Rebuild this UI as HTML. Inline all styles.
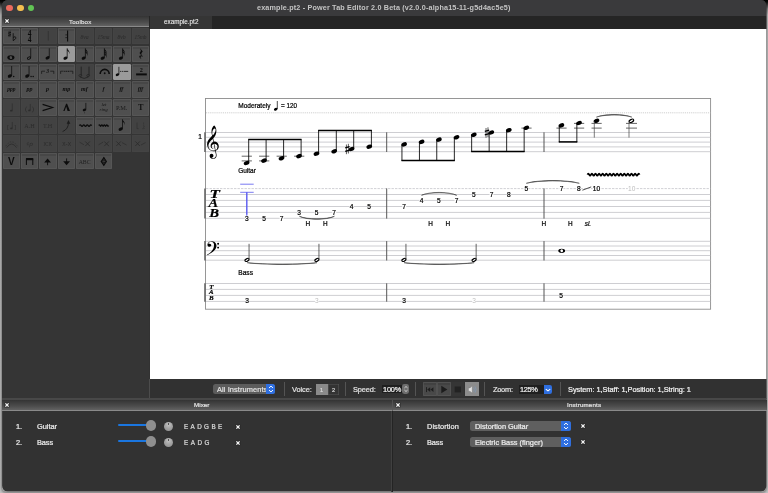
<!DOCTYPE html>
<html lang="en"><head><meta charset="utf-8"><title>example.pt2 - Power Tab Editor 2.0 Beta</title>
<style>
html,body{margin:0;padding:0}
body{width:768px;height:493px;overflow:hidden;position:relative;font-family:"Liberation Sans",sans-serif;
 background:linear-gradient(to bottom,#000 0,#0a0a0a 2px,#8a8a8a 9px,#bcbcbc 15px,#c4c4c4 100%)}
#win{position:absolute;left:0;top:0;width:768px;height:493px;background:#323232;
 clip-path:inset(0 1.7px 1.4px 2.1px round 5.5px)}
.abs{position:absolute}
.t{position:absolute;white-space:nowrap;will-change:transform;-webkit-text-stroke:0.22px currentColor}
#titlebar{left:0;top:0;width:768px;height:15.6px;background:#3a3a3c}
.tl{position:absolute;width:6.6px;height:6.6px;border-radius:50%;top:4.8px}
.hdr{position:absolute;background:linear-gradient(to bottom,#333 0,#3c3c3c 20%,#4c4c4c 60%,#626262 100%);border-bottom:1px solid #8a8a8a;box-sizing:border-box}
.cell{position:absolute;width:17.3px;height:16.6px;border-radius:1.2px;background:linear-gradient(to bottom,#474747 0,#474747 2.6px,#4f4f4f 3.4px,#4f4f4f 100%);box-shadow:inset 0 0 0 0.7px #5a5a5a}
.cell.dis{background:#424242;box-shadow:inset 0 0 0 0.6px #474747}
.cell.sel{background:#9b9b9b;box-shadow:none}
.cell svg{will-change:transform;position:absolute;left:0;top:0;width:17.2px;height:16.6px;overflow:visible}
.sep{position:absolute;width:1px;background:#545454;top:382.2px;height:13.6px}
.combo{position:absolute;background:#5c5c5c;border-radius:2.5px;overflow:hidden}
.blue{position:absolute;right:0;top:0;bottom:0;background:#2f6fe0}
.x{position:absolute;width:5px;height:5px}
#shadow{position:absolute;left:2.1px;top:0;width:764.2px;height:491.6px;border-radius:5px;box-shadow:0 0 2.5px 0.2px rgba(0,0,0,.38)}
</style></head><body><div id="shadow"></div><div id="win">

<div id="titlebar" class="abs">
<div class="tl" style="left:6.3px;background:#ec6a5e"></div>
<div class="tl" style="left:17.2px;background:#f4be4f"></div>
<div class="tl" style="left:27.9px;background:#61c454"></div>
<span id="title" class="t" style="left:256.70px;top:3px;font-size:7.2px;line-height:9px;color:#c4c4c4;font-weight:bold;font-style:normal;font-family:'Liberation Sans',sans-serif;letter-spacing:0.180px;-webkit-text-stroke:0;">example.pt2 - Power Tab Editor 2.0 Beta (v2.0.0-alpha15-11-g5d4ac5e5)</span>
</div>
<div class="abs" style="left:0;top:15.6px;width:149.4px;height:383px;background:#353535"></div>
<div class="hdr" style="left:0;top:15.6px;width:149.4px;height:11.6px"></div>
<svg class="x" style="left:3.9px;top:17.9px;width:6px;height:6px" viewBox="-3 -3 6 6"><rect x="-2.8" y="-2.8" width="5.6" height="5.6" rx="1.4" fill="#262626" opacity=".55"/><path d="M-1.6 -1.6L1.6 1.6M-1.6 1.6L1.6 -1.6" stroke="#f6f6f6" stroke-width="1.3" fill="none"/><rect x="-0.8" y="-0.8" width="1.6" height="1.6" fill="#f6f6f6"/></svg>
<span id="toolbox" class="t" style="left:68.90px;top:18px;font-size:6.2px;line-height:7px;color:#dcdcdc;font-weight:normal;font-style:normal;font-family:'Liberation Sans',sans-serif;letter-spacing:0.160px;">Toolbox</span>
<div class="cell " style="left:2.60px;top:27.80px"><svg viewBox="0 0 17.2 16.6"><g transform="translate(6.6,5.9) scale(0.72)"><path d="M-0.85 -3.9V4.5M0.85 -4.5V3.9" stroke="#0c0c0c" stroke-width="0.7"/><path d="M-1.9 -1.0L1.9 -2.1M-1.9 2.1L1.9 1.0" stroke="#0c0c0c" stroke-width="1.25"/></g><path d="M10.2 5.2V12.6" stroke="#0c0c0c" stroke-width="0.8"/><path d="M10.2 9.6C11.6 8 13.6 9.2 12.6 10.6C12 11.5 11 12 10.2 12.7" stroke="#0c0c0c" stroke-width="0.95" fill="none"/></svg></div>
<div class="cell " style="left:21.04px;top:27.80px"><svg viewBox="0 0 17.2 16.6"><text x="8.6" y="8.2" font-size="7.5" fill="#0c0c0c" font-weight="bold" font-style="normal" font-family="'Liberation Serif',serif" text-anchor="middle" >4</text><text x="8.6" y="13.6" font-size="7.5" fill="#0c0c0c" font-weight="bold" font-style="normal" font-family="'Liberation Serif',serif" text-anchor="middle" >4</text></svg></div>
<div class="cell dis" style="left:39.48px;top:27.80px"><svg viewBox="0 0 17.2 16.6"><path d="M9.3 3V12.5" stroke="#2c2c2c" stroke-width="0.7"/></svg></div>
<div class="cell " style="left:57.92px;top:27.80px"><svg viewBox="0 0 17.2 16.6"><path d="M9.6 2.6V13.6" stroke="#0c0c0c" stroke-width="1.1"/><circle cx="8.1" cy="6.8" r="0.6" fill="#0c0c0c"/><circle cx="8.1" cy="9.6" r="0.6" fill="#0c0c0c"/></svg></div>
<div class="cell dis" style="left:76.36px;top:27.80px"><svg viewBox="0 0 17.2 16.6"><text x="8.6" y="10.6" font-size="5.8" fill="#2a2a2a" font-weight="normal" font-style="italic" font-family="'Liberation Serif',serif" text-anchor="middle" >8va</text></svg></div>
<div class="cell dis" style="left:94.80px;top:27.80px"><svg viewBox="0 0 17.2 16.6"><text x="8.6" y="10.6" font-size="5.4" fill="#2a2a2a" font-weight="normal" font-style="italic" font-family="'Liberation Serif',serif" text-anchor="middle" >15ma</text></svg></div>
<div class="cell dis" style="left:113.24px;top:27.80px"><svg viewBox="0 0 17.2 16.6"><text x="8.6" y="10.6" font-size="5.8" fill="#2a2a2a" font-weight="normal" font-style="italic" font-family="'Liberation Serif',serif" text-anchor="middle" >8vb</text></svg></div>
<div class="cell dis" style="left:131.68px;top:27.80px"><svg viewBox="0 0 17.2 16.6"><text x="8.6" y="10.6" font-size="5.4" fill="#2a2a2a" font-weight="normal" font-style="italic" font-family="'Liberation Serif',serif" text-anchor="middle" >15mb</text></svg></div>
<div class="cell " style="left:2.60px;top:45.67px"><svg viewBox="0 0 17.2 16.6"><ellipse cx="7.9" cy="11.6" rx="3.55" ry="2.35" fill="#0c0c0c"/><ellipse cx="7.9" cy="11.6" rx="1.25" ry="1.5" transform="rotate(-28 7.9 11.6)" fill="#4f4f4f"/></svg></div>
<div class="cell " style="left:21.04px;top:45.67px"><svg viewBox="0 0 17.2 16.6"><ellipse cx="8.0" cy="12.1" rx="1.75" ry="1.05" transform="rotate(-24 8.0 12.1)" fill="none" stroke="#0c0c0c" stroke-width="0.9"/><path d="M9.70 11.60V2.30" stroke="#0c0c0c" stroke-width="0.75" fill="none"/></svg></div>
<div class="cell " style="left:39.48px;top:45.67px"><svg viewBox="0 0 17.2 16.6"><ellipse cx="8.6" cy="11.8" rx="2.15" ry="1.50" transform="rotate(-24 8.6 11.8)" fill="#0c0c0c"/><path d="M10.30 11.30V2.30" stroke="#0c0c0c" stroke-width="0.75" fill="none"/></svg></div>
<div class="cell sel" style="left:57.92px;top:45.67px"><svg viewBox="0 0 17.2 16.6"><ellipse cx="7.5" cy="12.1" rx="2.15" ry="1.50" transform="rotate(-24 7.5 12.1)" fill="#0c0c0c"/><path d="M9.20 11.60V2.30" stroke="#0c0c0c" stroke-width="0.75" fill="none"/><path d="M9.20 2.30c0.3 1.9 3.3 2.7 2.1 6.0c0.3-2.4-1.2-3.2-2.1-3.6z" fill="#0c0c0c"/></svg></div>
<div class="cell " style="left:76.36px;top:45.67px"><svg viewBox="0 0 17.2 16.6"><ellipse cx="7.7" cy="12.1" rx="2.15" ry="1.50" transform="rotate(-24 7.7 12.1)" fill="#0c0c0c"/><path d="M9.40 11.60V2.30" stroke="#0c0c0c" stroke-width="0.75" fill="none"/><path d="M9.40 2.30c0.3 1.9 3.3 2.7 2.1 6.0c0.3-2.4-1.2-3.2-2.1-3.6z" fill="#0c0c0c"/><path d="M9.40 4.30c0.3 1.9 3.3 2.7 2.1 6.0c0.3-2.4-1.2-3.2-2.1-3.6z" fill="#0c0c0c"/></svg></div>
<div class="cell " style="left:94.80px;top:45.67px"><svg viewBox="0 0 17.2 16.6"><ellipse cx="7.7" cy="12.1" rx="2.15" ry="1.50" transform="rotate(-24 7.7 12.1)" fill="#0c0c0c"/><path d="M9.40 11.60V2.30" stroke="#0c0c0c" stroke-width="0.75" fill="none"/><path d="M9.40 2.30c0.3 1.9 3.3 2.7 2.1 6.0c0.3-2.4-1.2-3.2-2.1-3.6z" fill="#0c0c0c"/><path d="M9.40 4.30c0.3 1.9 3.3 2.7 2.1 6.0c0.3-2.4-1.2-3.2-2.1-3.6z" fill="#0c0c0c"/><path d="M9.40 6.30c0.3 1.9 3.3 2.7 2.1 6.0c0.3-2.4-1.2-3.2-2.1-3.6z" fill="#0c0c0c"/></svg></div>
<div class="cell " style="left:113.24px;top:45.67px"><svg viewBox="0 0 17.2 16.6"><ellipse cx="7.9" cy="12.1" rx="2.15" ry="1.50" transform="rotate(-24 7.9 12.1)" fill="#0c0c0c"/><path d="M9.60 11.60V2.30" stroke="#0c0c0c" stroke-width="0.75" fill="none"/><path d="M9.60 2.30c0.3 1.9 3.3 2.7 2.1 6.0c0.3-2.4-1.2-3.2-2.1-3.6z" fill="#0c0c0c"/><path d="M9.60 4.30c0.3 1.9 3.3 2.7 2.1 6.0c0.3-2.4-1.2-3.2-2.1-3.6z" fill="#0c0c0c"/></svg></div>
<div class="cell " style="left:131.68px;top:45.67px"><svg viewBox="0 0 17.2 16.6"><path transform="translate(6.6,14.6) scale(0.0135,-0.0135)" d="M147 878 307 683Q257 624 230 581Q203 538 203 494Q203 457 227 416Q251 376 303 314L287 292Q243 320 205 320Q177 320 163 302Q149 283 149 257Q149 225 162 196Q176 168 199 142L186 123Q117 173 84 214Q51 255 51 303Q51 346 78 366Q105 386 143 386Q173 386 221 363V365L67 570Q168 659 168 736Q168 797 104 878Z" fill="#0c0c0c"/></svg></div>
<div class="cell " style="left:2.60px;top:63.54px"><svg viewBox="0 0 17.2 16.6"><ellipse cx="6.9" cy="12.0" rx="2.20" ry="1.54" transform="rotate(-24 6.9 12.0)" fill="#0c0c0c"/><path d="M8.65 11.50V2.00" stroke="#0c0c0c" stroke-width="0.75" fill="none"/><circle cx="10.70" cy="12.40" r="0.75" fill="#0c0c0c"/></svg></div>
<div class="cell " style="left:21.04px;top:63.54px"><svg viewBox="0 0 17.2 16.6"><ellipse cx="6.3" cy="12.0" rx="2.20" ry="1.54" transform="rotate(-24 6.3 12.0)" fill="#0c0c0c"/><path d="M8.05 11.50V2.00" stroke="#0c0c0c" stroke-width="0.75" fill="none"/><circle cx="10.10" cy="12.40" r="0.75" fill="#0c0c0c"/><circle cx="12.20" cy="12.40" r="0.75" fill="#0c0c0c"/></svg></div>
<div class="cell " style="left:39.48px;top:63.54px"><svg viewBox="0 0 17.2 16.6"><path d="M2.6 9.9V7.2H6.0M11.2 7.2H14.8V9.9" stroke="#0c0c0c" stroke-width="0.75" fill="none" opacity=".85"/><text x="8.7" y="9.4" font-size="5.6" fill="#0c0c0c" font-weight="bold" font-style="italic" font-family="'Liberation Serif',serif" text-anchor="middle" opacity=".9">3</text></svg></div>
<div class="cell " style="left:57.92px;top:63.54px"><svg viewBox="0 0 17.2 16.6"><path d="M2.6 9.9V7.2H5.6M11.8 7.2H14.8V9.9" stroke="#0c0c0c" stroke-width="0.75" fill="none" opacity=".8"/><path d="M6.2 7.3h1.3M8.1 7.3h1.3M10 7.3h1.3" stroke="#0c0c0c" stroke-width="1.3" opacity=".7"/></svg></div>
<div class="cell dis" style="left:76.36px;top:63.54px"><svg viewBox="0 0 17.2 16.6"><path d="M5.2 2.6V11.4M13.0 2.6V11.4" stroke="#1e1e1e" stroke-width="0.8"/><ellipse cx="4.3" cy="11.6" rx="1.4" ry="1.0" fill="none" stroke="#1e1e1e" stroke-width="0.6"/><ellipse cx="12.1" cy="11.6" rx="1.4" ry="1.0" fill="none" stroke="#1e1e1e" stroke-width="0.6"/><path d="M4.0 13.0Q8.2 15.8 12.4 13.0" stroke="#1e1e1e" stroke-width="0.7" fill="none"/></svg></div>
<div class="cell " style="left:94.80px;top:63.54px"><svg viewBox="0 0 17.2 16.6"><path d="M5.2 9.9A4.5 4.5 0 0 1 14.2 9.9" stroke="#0c0c0c" stroke-width="1.6" fill="none"/><circle cx="9.7" cy="9.2" r="0.95" fill="#0c0c0c"/></svg></div>
<div class="cell sel" style="left:113.24px;top:63.54px"><svg viewBox="0 0 17.2 16.6"><ellipse cx="4.5" cy="10.7" rx="1.85" ry="1.29" transform="rotate(-24 4.5 10.7)" fill="#0c0c0c"/><path d="M5.90 10.20V2.80" stroke="#0c0c0c" stroke-width="0.75" fill="none"/><path d="M7 7.4h1.2M8.8 7.4h1.2M10.6 7.4h4.6" stroke="#0c0c0c" stroke-width="1.0" opacity=".75"/></svg></div>
<div class="cell " style="left:131.68px;top:63.54px"><svg viewBox="0 0 17.2 16.6"><text x="9.3" y="8.2" font-size="6.2" fill="#0c0c0c" font-weight="bold" font-style="normal" font-family="'Liberation Serif',serif" text-anchor="middle" >2</text><path d="M4.1 10.4H14.8" stroke="#0c0c0c" stroke-width="2"/></svg></div>
<div class="cell " style="left:2.60px;top:81.41px"><svg viewBox="0 0 17.2 16.6"><text x="8.4" y="9.6" font-size="5.5" fill="#0c0c0c" font-weight="bold" font-style="italic" font-family="'Liberation Serif',serif" text-anchor="middle" >ppp</text></svg></div>
<div class="cell " style="left:21.04px;top:81.41px"><svg viewBox="0 0 17.2 16.6"><text x="8.4" y="9.6" font-size="6.0" fill="#0c0c0c" font-weight="bold" font-style="italic" font-family="'Liberation Serif',serif" text-anchor="middle" >pp</text></svg></div>
<div class="cell " style="left:39.48px;top:81.41px"><svg viewBox="0 0 17.2 16.6"><text x="8.4" y="9.6" font-size="6.0" fill="#0c0c0c" font-weight="bold" font-style="italic" font-family="'Liberation Serif',serif" text-anchor="middle" >p</text></svg></div>
<div class="cell " style="left:57.92px;top:81.41px"><svg viewBox="0 0 17.2 16.6"><text x="8.4" y="9.6" font-size="6.0" fill="#0c0c0c" font-weight="bold" font-style="italic" font-family="'Liberation Serif',serif" text-anchor="middle" >mp</text></svg></div>
<div class="cell " style="left:76.36px;top:81.41px"><svg viewBox="0 0 17.2 16.6"><text x="8.4" y="9.6" font-size="6.0" fill="#0c0c0c" font-weight="bold" font-style="italic" font-family="'Liberation Serif',serif" text-anchor="middle" >mf</text></svg></div>
<div class="cell " style="left:94.80px;top:81.41px"><svg viewBox="0 0 17.2 16.6"><text x="8.4" y="9.6" font-size="6.0" fill="#0c0c0c" font-weight="bold" font-style="italic" font-family="'Liberation Serif',serif" text-anchor="middle" >f</text></svg></div>
<div class="cell " style="left:113.24px;top:81.41px"><svg viewBox="0 0 17.2 16.6"><text x="8.4" y="9.6" font-size="6.0" fill="#0c0c0c" font-weight="bold" font-style="italic" font-family="'Liberation Serif',serif" text-anchor="middle" >ff</text></svg></div>
<div class="cell " style="left:131.68px;top:81.41px"><svg viewBox="0 0 17.2 16.6"><text x="8.4" y="9.6" font-size="5.5" fill="#0c0c0c" font-weight="bold" font-style="italic" font-family="'Liberation Serif',serif" text-anchor="middle" >fff</text></svg></div>
<div class="cell dis" style="left:2.60px;top:99.28px"><svg viewBox="0 0 17.2 16.6"><path d="M9.3 4.5V11.5" stroke="#2c2c2c" stroke-width="0.7"/><ellipse cx="8.3" cy="11.7" rx="1.3" ry="0.9" fill="#2c2c2c"/></svg></div>
<div class="cell dis" style="left:21.04px;top:99.28px"><svg viewBox="0 0 17.2 16.6"><text x="5.2" y="12.3" font-size="7" fill="#2c2c2c" font-weight="normal" font-style="normal" font-family="'Liberation Serif',serif" text-anchor="middle" >(</text><text x="12.0" y="12.3" font-size="7" fill="#2c2c2c" font-weight="normal" font-style="normal" font-family="'Liberation Serif',serif" text-anchor="middle" >)</text><path d="M9.3 5V11.2" stroke="#2c2c2c" stroke-width="0.7"/><ellipse cx="8.4" cy="11.4" rx="1.2" ry="0.9" fill="#2c2c2c"/></svg></div>
<div class="cell " style="left:39.48px;top:99.28px"><svg viewBox="0 0 17.2 16.6"><path d="M3.6 5.4L13.6 8.5L3.6 11.6" stroke="#0c0c0c" stroke-width="1.15" fill="none"/></svg></div>
<div class="cell " style="left:57.92px;top:99.28px"><svg viewBox="0 0 17.2 16.6"><path d="M5.3 11.9L8.1 4.8H9.1L12.0 11.9H9.6L8.2 7.6L6.6 11.9Z" fill="#0c0c0c"/></svg></div>
<div class="cell " style="left:76.36px;top:99.28px"><svg viewBox="0 0 17.2 16.6"><ellipse cx="8.5" cy="10.9" rx="1.80" ry="1.26" transform="rotate(-24 8.5 10.9)" fill="#0c0c0c"/><path d="M9.85 10.40V3.90" stroke="#0c0c0c" stroke-width="0.75" fill="none"/><circle cx="8.6" cy="13.8" r="0.5" fill="#0c0c0c" opacity=".7"/></svg></div>
<div class="cell " style="left:94.80px;top:99.28px"><svg viewBox="0 0 17.2 16.6"><text x="8.9" y="7.4" font-size="4.9" fill="#0c0c0c" font-weight="normal" font-style="italic" font-family="'Liberation Serif',serif" text-anchor="middle" opacity=".85">let</text><text x="8.6" y="11.7" font-size="4.9" fill="#0c0c0c" font-weight="normal" font-style="italic" font-family="'Liberation Serif',serif" text-anchor="middle" opacity=".85">ring</text></svg></div>
<div class="cell " style="left:113.24px;top:99.28px"><svg viewBox="0 0 17.2 16.6"><text x="8.7" y="10.8" font-size="6.3" fill="#0c0c0c" font-weight="normal" font-style="normal" font-family="'Liberation Serif',serif" text-anchor="middle" opacity=".75">P.M.</text></svg></div>
<div class="cell " style="left:131.68px;top:99.28px"><svg viewBox="0 0 17.2 16.6"><text x="8.7" y="11.4" font-size="8.2" fill="#0c0c0c" font-weight="bold" font-style="normal" font-family="'Liberation Serif',serif" text-anchor="middle" opacity=".9">T</text></svg></div>
<div class="cell dis" style="left:2.60px;top:117.15px"><svg viewBox="0 0 17.2 16.6"><text x="5.2" y="12.3" font-size="6.5" fill="#2c2c2c" font-weight="normal" font-style="normal" font-family="'Liberation Serif',serif" text-anchor="middle" >[</text><text x="12.0" y="12.3" font-size="6.5" fill="#2c2c2c" font-weight="normal" font-style="normal" font-family="'Liberation Serif',serif" text-anchor="middle" >]</text><path d="M9.3 5V11.2" stroke="#2c2c2c" stroke-width="0.7"/><ellipse cx="8.4" cy="11.4" rx="1.2" ry="0.9" fill="#2c2c2c"/></svg></div>
<div class="cell dis" style="left:21.04px;top:117.15px"><svg viewBox="0 0 17.2 16.6"><text x="8.6" y="10.9" font-size="6.2" fill="#2c2c2c" font-weight="normal" font-style="normal" font-family="'Liberation Serif',serif" text-anchor="middle" >A.H</text></svg></div>
<div class="cell dis" style="left:39.48px;top:117.15px"><svg viewBox="0 0 17.2 16.6"><text x="8.6" y="10.9" font-size="6.2" fill="#2c2c2c" font-weight="normal" font-style="normal" font-family="'Liberation Serif',serif" text-anchor="middle" >T.H</text></svg></div>
<div class="cell dis" style="left:57.92px;top:117.15px"><svg viewBox="0 0 17.2 16.6"><path d="M4.6 14.6Q10.4 12.2 10.5 5.6" stroke="#1c1c1c" stroke-width="0.85" fill="none"/><path d="M8.7 6.8L10.5 2.9L12.3 6.8Z" fill="#1c1c1c"/></svg></div>
<div class="cell " style="left:76.36px;top:117.15px"><svg viewBox="0 0 17.2 16.6"><path d="M3.4 8.6q0.88 -1.60 1.75 0q0.88 1.60 1.75 0q0.88 -1.60 1.75 0q0.88 1.60 1.75 0q0.88 -1.60 1.75 0q0.88 1.60 1.75 0q0.88 -1.60 1.75 0" stroke="#0c0c0c" stroke-width="1.25" fill="none"/></svg></div>
<div class="cell " style="left:94.80px;top:117.15px"><svg viewBox="0 0 17.2 16.6"><path d="M3.8 8.6q0.61 -1.50 1.23 0q0.61 1.50 1.23 0q0.61 -1.50 1.23 0q0.61 1.50 1.23 0q0.61 -1.50 1.23 0q0.61 1.50 1.23 0q0.61 -1.50 1.23 0q0.61 1.50 1.23 0" stroke="#0c0c0c" stroke-width="1.3" fill="none"/></svg></div>
<div class="cell " style="left:113.24px;top:117.15px"><svg viewBox="0 0 17.2 16.6"><ellipse cx="7.7" cy="12.1" rx="2.25" ry="1.57" transform="rotate(-24 7.7 12.1)" fill="#0c0c0c"/><path d="M9.50 11.60V2.30" stroke="#0c0c0c" stroke-width="0.75" fill="none"/><path d="M9.50 2.30c0.3 1.9 3.3 2.7 2.1 6.0c0.3-2.4-1.2-3.2-2.1-3.6z" fill="#0c0c0c"/></svg></div>
<div class="cell dis" style="left:131.68px;top:117.15px"><svg viewBox="0 0 17.2 16.6"><path d="M5 5.6V11.6H6.6" stroke="#303030" stroke-width="0.7" fill="none"/><path d="M11.6 5.6V11.6H10" stroke="#303030" stroke-width="0.7" fill="none" stroke-dasharray="1.2 0.8"/><path d="M12.4 9v4" stroke="#303030" stroke-width="0.5" stroke-dasharray="1 1"/></svg></div>
<div class="cell dis" style="left:2.60px;top:135.02px"><svg viewBox="0 0 17.2 16.6"><path d="M3.6 12.6Q8.6 5.4 13.6 12.6" stroke="#2c2c2c" stroke-width="0.8" fill="none"/><path d="M2.8 11.2Q8.6 2.4 14.4 11.2" stroke="#2c2c2c" stroke-width="0.6" fill="none" stroke-dasharray="1.4 1.4"/></svg></div>
<div class="cell dis" style="left:21.04px;top:135.02px"><svg viewBox="0 0 17.2 16.6"><text x="8.6" y="11.0" font-size="6" fill="#2c2c2c" font-weight="normal" font-style="italic" font-family="'DejaVu Serif',serif" text-anchor="middle" >♯p</text></svg></div>
<div class="cell dis" style="left:39.48px;top:135.02px"><svg viewBox="0 0 17.2 16.6"><text x="8.6" y="10.9" font-size="6.6" fill="#2c2c2c" font-weight="normal" font-style="normal" font-family="'Liberation Sans',sans-serif" text-anchor="middle" >x:x</text></svg></div>
<div class="cell dis" style="left:57.92px;top:135.02px"><svg viewBox="0 0 17.2 16.6"><text x="8.6" y="10.9" font-size="6.6" fill="#2c2c2c" font-weight="normal" font-style="normal" font-family="'Liberation Sans',sans-serif" text-anchor="middle" >x-x</text></svg></div>
<div class="cell dis" style="left:76.36px;top:135.02px"><svg viewBox="0 0 17.2 16.6"><path d="M3.6 7.2L8 9.8" stroke="#2c2c2c" stroke-width="0.7"/><path d="M9.3 6.500000000000001L13.899999999999999 11.100000000000001M9.3 11.100000000000001L13.899999999999999 6.500000000000001" stroke="#2a2a2a" stroke-width="0.8" fill="none"/></svg></div>
<div class="cell dis" style="left:94.80px;top:135.02px"><svg viewBox="0 0 17.2 16.6"><path d="M3.6 9.8L8 7.2" stroke="#2c2c2c" stroke-width="0.7"/><path d="M9.3 6.500000000000001L13.899999999999999 11.100000000000001M9.3 11.100000000000001L13.899999999999999 6.500000000000001" stroke="#2a2a2a" stroke-width="0.8" fill="none"/></svg></div>
<div class="cell dis" style="left:113.24px;top:135.02px"><svg viewBox="0 0 17.2 16.6"><path d="M3.3 6.3999999999999995L7.8999999999999995 11.0M3.3 11.0L7.8999999999999995 6.3999999999999995" stroke="#2a2a2a" stroke-width="0.8" fill="none"/><path d="M9 7.6L13.6 10" stroke="#2c2c2c" stroke-width="0.7"/></svg></div>
<div class="cell dis" style="left:131.68px;top:135.02px"><svg viewBox="0 0 17.2 16.6"><path d="M3.3 6.3999999999999995L7.8999999999999995 11.0M3.3 11.0L7.8999999999999995 6.3999999999999995" stroke="#2a2a2a" stroke-width="0.8" fill="none"/><path d="M9 10L13.6 7.6" stroke="#2c2c2c" stroke-width="0.7"/></svg></div>
<div class="cell " style="left:2.60px;top:152.89px"><svg viewBox="0 0 17.2 16.6"><text x="8.4" y="12.4" font-size="10" fill="#0c0c0c" font-weight="bold" font-style="normal" font-family="'Liberation Sans',sans-serif" text-anchor="middle" >V</text></svg></div>
<div class="cell " style="left:21.04px;top:152.89px"><svg viewBox="0 0 17.2 16.6"><path d="M5.4 12V5.6H11.8V12" stroke="#0c0c0c" stroke-width="1" fill="none"/><path d="M5 6.2H12.2" stroke="#0c0c0c" stroke-width="2"/></svg></div>
<div class="cell " style="left:39.48px;top:152.89px"><svg viewBox="0 0 17.2 16.6"><path d="M8.6 5.4L12 9.4H5.2Z" fill="#0c0c0c"/><path d="M8.6 8V12.2" stroke="#0c0c0c" stroke-width="0.9"/></svg></div>
<div class="cell " style="left:57.92px;top:152.89px"><svg viewBox="0 0 17.2 16.6"><path d="M8.6 12.2L12 8.2H5.2Z" fill="#0c0c0c"/><path d="M8.6 5.4V9" stroke="#0c0c0c" stroke-width="0.9"/></svg></div>
<div class="cell " style="left:76.36px;top:152.89px"><svg viewBox="0 0 17.2 16.6"><text x="8.6" y="10.8" font-size="5.8" fill="#222" font-weight="normal" font-style="normal" font-family="'Liberation Serif',serif" text-anchor="middle" >ABC</text></svg></div>
<div class="cell " style="left:94.80px;top:152.89px"><svg viewBox="0 0 17.2 16.6"><path d="M8.8 4.6L11.4 8.4L8.8 12.2L6.2 8.4Z" stroke="#0c0c0c" stroke-width="1.1" fill="none"/><circle cx="8.8" cy="8.4" r="1.5" stroke="#0c0c0c" stroke-width="0.8" fill="none"/><path d="M8.8 4.2V12.6" stroke="#0c0c0c" stroke-width="0.5"/></svg></div>
<div class="abs" style="left:149.4px;top:15.6px;width:620px;height:13px;background:#252525"></div>
<div class="abs" style="left:149.8px;top:15.9px;width:62.2px;height:12.7px;background:#353535"></div>
<span id="tab" class="t" style="left:163.70px;top:18px;font-size:6.3px;line-height:7px;color:#f0f0f0;font-weight:normal;font-style:normal;font-family:'Liberation Sans',sans-serif;letter-spacing:0.008px;-webkit-text-stroke:0.08px currentColor;">example.pt2</span>
<div class="abs" style="left:149.6px;top:28.5px;width:617px;height:350.8px;background:#fff"></div>
<div class="abs" style="left:149.4px;top:379.3px;width:620px;height:19.4px;background:#313131"></div>
<div class="abs" style="left:149.3px;top:379.3px;width:0.9px;height:19.4px;background:#4c4c4c"></div>
<div class="abs" style="left:0;top:398.2px;width:768px;height:1.8px;background:#484848"></div>
<svg class="abs" style="left:0;top:0;will-change:transform" width="768" height="493" viewBox="0 0 768 493" font-family="'Liberation Sans',sans-serif">
<rect x="205.5" y="98.5" width="505.1" height="210.7" fill="none" stroke="#8c8c8c" stroke-width="0.9"/>
<path d="M206 112.8H710.4" stroke="#c4c4c4" stroke-width="0.8" stroke-dasharray="1.2 0.9"/>
<path d="M206 188.6H710.4" stroke="#c2c2c8" stroke-width="0.75" stroke-dasharray="2.4 1.1"/>
<path d="M206 132.5H710.4" stroke="#bdbdc3" stroke-width="0.75"/>
<path d="M206 137.3H710.4" stroke="#bdbdc3" stroke-width="0.75"/>
<path d="M206 142.1H710.4" stroke="#bdbdc3" stroke-width="0.75"/>
<path d="M206 146.9H710.4" stroke="#bdbdc3" stroke-width="0.75"/>
<path d="M206 151.7H710.4" stroke="#bdbdc3" stroke-width="0.75"/>
<path d="M206 194.5H710.4" stroke="#bdbdc3" stroke-width="0.75"/>
<path d="M206 200.4H710.4" stroke="#bdbdc3" stroke-width="0.75"/>
<path d="M206 206.5H710.4" stroke="#bdbdc3" stroke-width="0.75"/>
<path d="M206 212.4H710.4" stroke="#bdbdc3" stroke-width="0.75"/>
<path d="M206 218.3H710.4" stroke="#bdbdc3" stroke-width="0.75"/>
<path d="M206 241.3H710.4" stroke="#bdbdc3" stroke-width="0.75"/>
<path d="M206 246.0H710.4" stroke="#bdbdc3" stroke-width="0.75"/>
<path d="M206 250.7H710.4" stroke="#bdbdc3" stroke-width="0.75"/>
<path d="M206 255.5H710.4" stroke="#bdbdc3" stroke-width="0.75"/>
<path d="M206 260.2H710.4" stroke="#bdbdc3" stroke-width="0.75"/>
<path d="M206 283.5H710.4" stroke="#bdbdc3" stroke-width="0.75"/>
<path d="M206 289.4H710.4" stroke="#bdbdc3" stroke-width="0.75"/>
<path d="M206 295.4H710.4" stroke="#bdbdc3" stroke-width="0.75"/>
<path d="M206 301.4H710.4" stroke="#bdbdc3" stroke-width="0.75"/>
<path d="M205 132.3V152.0" stroke="#6e6e6e" stroke-width="1.7"/>
<path d="M205 188.4V218.60000000000002" stroke="#6e6e6e" stroke-width="1.7"/>
<path d="M205 241.10000000000002V260.5" stroke="#6e6e6e" stroke-width="1.7"/>
<path d="M205 283.3V301.7" stroke="#6e6e6e" stroke-width="1.7"/>
<path d="M386.7 132.3V152.0" stroke="#555" stroke-width="1"/>
<path d="M386.7 188.4V218.60000000000002" stroke="#555" stroke-width="1"/>
<path d="M386.7 241.10000000000002V260.5" stroke="#555" stroke-width="1"/>
<path d="M386.7 283.3V301.7" stroke="#555" stroke-width="1"/>
<path d="M544.0 132.3V152.0" stroke="#555" stroke-width="1"/>
<path d="M544.0 188.4V218.60000000000002" stroke="#555" stroke-width="1"/>
<path d="M544.0 241.10000000000002V260.5" stroke="#555" stroke-width="1"/>
<path d="M544.0 283.3V301.7" stroke="#555" stroke-width="1"/>
<path transform="translate(206.1,151.2) scale(0.0192,-0.0192)" d="M314 801Q300 854 291 906Q282 958 282 1012Q282 1059 288 1100Q295 1142 307 1177Q320 1217 341 1252Q362 1288 386 1311Q409 1334 427 1334Q451 1334 493 1249Q514 1206 524 1156Q534 1106 534 1049Q534 978 515 908Q496 837 460 775Q423 713 372 666L407 498Q422 500 432 501Q442 502 447 502Q508 502 556 468Q604 433 632 377Q661 321 661 254Q661 177 622 116Q582 54 503 25Q508 8 532 -117Q538 -147 541 -164Q544 -182 545 -195Q546 -208 546 -225Q546 -275 522 -314Q497 -354 456 -376Q414 -398 363 -398Q311 -398 271 -378Q231 -359 208 -324Q185 -290 185 -245Q185 -197 212 -165Q238 -133 287 -133Q329 -133 356 -164Q382 -194 382 -236Q382 -272 357 -299Q332 -326 292 -326H282Q308 -365 364 -365Q433 -365 472 -320Q511 -275 511 -205Q511 -188 507 -160Q503 -131 493 -91Q483 -51 478 -25Q472 1 470 12Q436 2 390 2Q304 2 222 52Q142 102 96 184Q50 266 50 361Q50 451 91 530Q132 609 192 675Q253 741 314 801ZM341 826Q364 838 390 870Q416 903 440 945Q464 987 479 1030Q494 1072 494 1106Q494 1142 483 1163Q472 1184 445 1184Q421 1184 398 1162Q376 1140 358 1104Q341 1067 331 1022Q321 977 321 930Q321 898 328 872Q334 846 341 826ZM398 379Q371 373 347 354Q323 334 308 306Q294 279 294 248Q294 223 307 196Q320 170 339 154Q352 142 365 136Q380 129 380 123Q380 120 370 117Q332 126 302 151Q271 176 254 212Q236 247 236 287Q236 330 254 370Q271 410 302 442Q334 474 374 490L345 641Q229 547 174 456Q120 366 120 277Q120 212 154 156Q188 100 247 66Q306 31 380 31Q400 31 420 35Q441 39 464 45ZM495 55Q593 97 593 227Q593 270 571 306Q549 341 512 362Q475 383 429 383Z" fill="#000"/>
<path transform="translate(206.1,257.0) scale(0.0175,-0.0175)" d="M50 123Q216 231 288 301Q336 348 373 408Q410 469 432 536Q453 603 453 669Q453 728 435 774Q417 819 383 845Q349 871 302 871Q284 871 264 867Q245 863 224 855Q181 839 158 814Q135 788 135 765Q135 756 143 752Q151 748 158 748Q168 748 183 752Q190 754 196 755Q203 756 210 756Q248 756 272 734Q296 711 296 674Q296 638 266 612Q236 586 195 586Q146 586 111 617Q76 648 76 697Q76 756 109 802Q142 848 198 874Q255 900 324 900Q400 900 460 867Q520 834 556 776Q591 719 591 646Q591 551 538 464Q511 419 476 379Q442 339 389 298Q336 256 256 208Q176 160 57 101ZM687 809Q710 809 726 793Q742 777 742 754Q742 731 726 716Q710 700 687 700Q664 700 648 716Q632 731 632 754Q632 777 648 793Q664 809 687 809ZM687 589Q710 589 726 573Q742 557 742 534Q742 511 726 496Q710 480 687 480Q664 480 648 496Q632 511 632 534Q632 557 648 573Q664 589 687 589Z" fill="#000"/>
<text x="209.4" y="198.2" font-size="12.4" fill="#000" stroke="#000" stroke-width="0.22" text-anchor="start" font-weight="bold" font-style="italic" font-family="'Liberation Serif',serif" textLength="10.4" lengthAdjust="spacingAndGlyphs">T</text>
<text x="208.6" y="207.2" font-size="12.4" fill="#000" stroke="#000" stroke-width="0.22" text-anchor="start" font-weight="bold" font-style="italic" font-family="'Liberation Serif',serif" textLength="9.6" lengthAdjust="spacingAndGlyphs">A</text>
<text x="209.2" y="216.9" font-size="12.4" fill="#000" stroke="#000" stroke-width="0.22" text-anchor="start" font-weight="bold" font-style="italic" font-family="'Liberation Serif',serif" textLength="9.8" lengthAdjust="spacingAndGlyphs">B</text>
<text x="211.3" y="289.2" font-size="6.9" fill="#000" stroke="#000" stroke-width="0.22" text-anchor="middle" font-weight="bold" font-style="italic" font-family="'Liberation Serif',serif" >T</text>
<text x="211.3" y="294.4" font-size="6.9" fill="#000" stroke="#000" stroke-width="0.22" text-anchor="middle" font-weight="bold" font-style="italic" font-family="'Liberation Serif',serif" >A</text>
<text x="211.3" y="299.9" font-size="6.9" fill="#000" stroke="#000" stroke-width="0.22" text-anchor="middle" font-weight="bold" font-style="italic" font-family="'Liberation Serif',serif" >B</text>
<text x="200.2" y="138.9" font-size="6.6" fill="#000" stroke="#000" stroke-width="0.22" text-anchor="middle" font-weight="normal" font-style="normal" >1</text>
<text x="238.2" y="108" font-size="6.9" fill="#000" stroke="#000" stroke-width="0.22" text-anchor="start" font-weight="normal" font-style="normal" textLength="32.3" lengthAdjust="spacingAndGlyphs">Moderately</text>
<ellipse cx="275.7" cy="109.3" rx="1.9" ry="1.35" transform="rotate(-24 275.7 109.3)" fill="#000"/><path d="M277.3 109V101" stroke="#000" stroke-width="0.7"/>
<text x="281" y="108" font-size="6.9" fill="#000" stroke="#000" stroke-width="0.22" text-anchor="start" font-weight="normal" font-style="normal" textLength="16" lengthAdjust="spacingAndGlyphs">= 120</text>
<text x="238.2" y="173" font-size="6.9" fill="#000" stroke="#000" stroke-width="0.22" text-anchor="start" font-weight="normal" font-style="normal" textLength="17.7" lengthAdjust="spacingAndGlyphs">Guitar</text>
<text x="238.2" y="274.7" font-size="6.9" fill="#000" stroke="#000" stroke-width="0.22" text-anchor="start" font-weight="normal" font-style="normal" textLength="14.8" lengthAdjust="spacingAndGlyphs">Bass</text>
<path d="M241.70 156.2H251.90" stroke="#4a4a4a" stroke-width="0.85"/>
<path d="M241.70 160.9H251.90" stroke="#4a4a4a" stroke-width="0.85"/>
<path d="M259.10 156.2H269.30" stroke="#4a4a4a" stroke-width="0.85"/>
<path d="M259.10 160.9H269.30" stroke="#4a4a4a" stroke-width="0.85"/>
<path d="M276.60 156.2H286.80" stroke="#4a4a4a" stroke-width="0.85"/>
<path d="M294.10 156.2H304.30" stroke="#4a4a4a" stroke-width="0.85"/>
<ellipse cx="246.6" cy="163.0" rx="2.95" ry="2.0" transform="rotate(-24 246.6 163.0)" fill="#000"/>
<path d="M248.70 162.40V139.2" stroke="#000" stroke-width="0.85"/>
<ellipse cx="264.0" cy="160.6" rx="2.95" ry="2.0" transform="rotate(-24 264.0 160.6)" fill="#000"/>
<path d="M266.10 160.00V139.2" stroke="#000" stroke-width="0.85"/>
<ellipse cx="281.5" cy="158.3" rx="2.95" ry="2.0" transform="rotate(-24 281.5 158.3)" fill="#000"/>
<path d="M283.60 157.70V139.2" stroke="#000" stroke-width="0.85"/>
<ellipse cx="299.0" cy="156.1" rx="2.95" ry="2.0" transform="rotate(-24 299.0 156.1)" fill="#000"/>
<path d="M301.10 155.50V139.2" stroke="#000" stroke-width="0.85"/>
<path d="M248.3 139.6H301.5" stroke="#000" stroke-width="1.5"/>
<ellipse cx="316.5" cy="153.7" rx="2.95" ry="2.0" transform="rotate(-24 316.5 153.7)" fill="#000"/>
<path d="M318.60 153.10V130" stroke="#000" stroke-width="0.85"/>
<ellipse cx="334.2" cy="151.3" rx="2.95" ry="2.0" transform="rotate(-24 334.2 151.3)" fill="#000"/>
<path d="M336.30 150.70V130" stroke="#000" stroke-width="0.85"/>
<ellipse cx="351.6" cy="149.0" rx="2.95" ry="2.0" transform="rotate(-24 351.6 149.0)" fill="#000"/>
<path d="M353.70 148.40V130" stroke="#000" stroke-width="0.85"/>
<ellipse cx="369.3" cy="146.7" rx="2.95" ry="2.0" transform="rotate(-24 369.3 146.7)" fill="#000"/>
<path d="M371.40 146.10V130" stroke="#000" stroke-width="0.85"/>
<path d="M318.2 130.4H371.8" stroke="#000" stroke-width="1.5"/>
<g transform="translate(347.4,149.0) scale(1.1555555555555557)"><path d="M-0.85 -3.9V4.5M0.85 -4.5V3.9" stroke="#000" stroke-width="0.55"/><path d="M-1.9 -1.0L1.9 -2.1M-1.9 2.1L1.9 1.0" stroke="#000" stroke-width="1.15"/></g>
<ellipse cx="404.1" cy="144.4" rx="2.95" ry="2.0" transform="rotate(-24 404.1 144.4)" fill="#000"/>
<path d="M401.95 145.00V161" stroke="#000" stroke-width="0.85"/>
<ellipse cx="421.6" cy="141.9" rx="2.95" ry="2.0" transform="rotate(-24 421.6 141.9)" fill="#000"/>
<path d="M419.45 142.50V161" stroke="#000" stroke-width="0.85"/>
<ellipse cx="438.9" cy="139.6" rx="2.95" ry="2.0" transform="rotate(-24 438.9 139.6)" fill="#000"/>
<path d="M436.75 140.20V161" stroke="#000" stroke-width="0.85"/>
<ellipse cx="456.5" cy="137.3" rx="2.95" ry="2.0" transform="rotate(-24 456.5 137.3)" fill="#000"/>
<path d="M454.35 137.90V161" stroke="#000" stroke-width="0.85"/>
<path d="M401.5 160.6H454.8" stroke="#000" stroke-width="1.5"/>
<path d="M521.40 128.1H531.60" stroke="#4a4a4a" stroke-width="0.85"/>
<ellipse cx="473.8" cy="134.8" rx="2.95" ry="2.0" transform="rotate(-24 473.8 134.8)" fill="#000"/>
<path d="M471.65 135.40V152" stroke="#000" stroke-width="0.85"/>
<ellipse cx="491.3" cy="132.5" rx="2.95" ry="2.0" transform="rotate(-24 491.3 132.5)" fill="#000"/>
<path d="M489.15 133.10V152" stroke="#000" stroke-width="0.85"/>
<ellipse cx="508.8" cy="130.2" rx="2.95" ry="2.0" transform="rotate(-24 508.8 130.2)" fill="#000"/>
<path d="M506.65 130.80V152" stroke="#000" stroke-width="0.85"/>
<ellipse cx="526.3" cy="127.8" rx="2.95" ry="2.0" transform="rotate(-24 526.3 127.8)" fill="#000"/>
<path d="M524.15 128.40V152" stroke="#000" stroke-width="0.85"/>
<path d="M471.2 151.6H524.6" stroke="#000" stroke-width="1.5"/>
<g transform="translate(487.0,132.5) scale(1.1555555555555557)"><path d="M-0.85 -3.9V4.5M0.85 -4.5V3.9" stroke="#000" stroke-width="0.55"/><path d="M-1.9 -1.0L1.9 -2.1M-1.9 2.1L1.9 1.0" stroke="#000" stroke-width="1.15"/></g>
<path d="M556.40 128.1H566.60" stroke="#4a4a4a" stroke-width="0.85"/>
<path d="M574.00 123.4H584.20" stroke="#4a4a4a" stroke-width="0.85"/>
<path d="M574.00 128.1H584.20" stroke="#4a4a4a" stroke-width="0.85"/>
<path d="M591.50 123.4H601.70" stroke="#4a4a4a" stroke-width="0.85"/>
<path d="M591.50 128.1H601.70" stroke="#4a4a4a" stroke-width="0.85"/>
<path d="M626.00 123.4H637.00" stroke="#4a4a4a" stroke-width="0.85"/>
<path d="M626.00 128.1H637.00" stroke="#4a4a4a" stroke-width="0.85"/>
<ellipse cx="561.4" cy="125.4" rx="2.95" ry="2.0" transform="rotate(-24 561.4 125.4)" fill="#000"/>
<path d="M559.25 126.00V142.2" stroke="#000" stroke-width="0.85"/>
<ellipse cx="579.0" cy="123.0" rx="2.95" ry="2.0" transform="rotate(-24 579.0 123.0)" fill="#000"/>
<path d="M576.85 123.60V142.2" stroke="#000" stroke-width="0.85"/>
<path d="M558.8 141.9H577.3" stroke="#000" stroke-width="1.5"/>
<ellipse cx="596.5" cy="120.8" rx="2.95" ry="2.0" transform="rotate(-24 596.5 120.8)" fill="#000"/>
<path d="M594.3 121.4V137.6" stroke="#444" stroke-width="0.7"/>
<ellipse cx="631.4" cy="120.8" rx="2.95" ry="2.0" transform="rotate(-24 631.4 120.8)" fill="#000"/><ellipse cx="631.4" cy="120.8" rx="2.00" ry="0.70" transform="rotate(-34 631.4 120.8)" fill="#fff"/>
<path d="M629 121.4V137.6" stroke="#444" stroke-width="0.7"/>
<path d="M596.4 117.1C604.19 113.77 624.01 113.77 631.8 117.1C624.01 114.37 604.19 114.37 596.4 117.1Z" fill="#333" stroke="#333" stroke-width="0.5"/>
<path d="M587.4 174.6q0.9 -2.0 1.8 0q0.9 2.0 1.8 0q0.9 -2.0 1.8 0q0.9 2.0 1.8 0q0.9 -2.0 1.8 0q0.9 2.0 1.8 0q0.9 -2.0 1.8 0q0.9 2.0 1.8 0q0.9 -2.0 1.8 0q0.9 2.0 1.8 0q0.9 -2.0 1.8 0q0.9 2.0 1.8 0q0.9 -2.0 1.8 0q0.9 2.0 1.8 0q0.9 -2.0 1.8 0q0.9 2.0 1.8 0q0.9 -2.0 1.8 0q0.9 2.0 1.8 0q0.9 -2.0 1.8 0q0.9 2.0 1.8 0q0.9 -2.0 1.8 0q0.9 2.0 1.8 0q0.9 -2.0 1.8 0q0.9 2.0 1.8 0q0.9 -2.0 1.8 0q0.9 2.0 1.8 0q0.9 -2.0 1.8 0q0.9 2.0 1.8 0q0.9 -2.0 1.8 0" stroke="#000" stroke-width="1.75" fill="none"/>
<path d="M240.2 184.2H253.7M240.2 192.3H253.7" stroke="#6a6af0" stroke-width="0.9"/><path d="M246.8 192.3V216" stroke="#5c5cf0" stroke-width="1"/>
<rect x="244.85" y="215.70" width="3.90" height="5.2" fill="#fff"/><text x="246.8" y="220.65" font-size="6.6" fill="#000" stroke="#000" stroke-width="0.22" text-anchor="middle" font-weight="normal" font-style="normal" >3</text>
<rect x="262.25" y="215.70" width="3.90" height="5.2" fill="#fff"/><text x="264.2" y="220.65" font-size="6.6" fill="#000" stroke="#000" stroke-width="0.22" text-anchor="middle" font-weight="normal" font-style="normal" >5</text>
<rect x="279.65" y="215.70" width="3.90" height="5.2" fill="#fff"/><text x="281.6" y="220.65" font-size="6.6" fill="#000" stroke="#000" stroke-width="0.22" text-anchor="middle" font-weight="normal" font-style="normal" >7</text>
<rect x="297.25" y="209.80" width="3.90" height="5.2" fill="#fff"/><text x="299.2" y="214.75" font-size="6.6" fill="#000" stroke="#000" stroke-width="0.22" text-anchor="middle" font-weight="normal" font-style="normal" >3</text>
<rect x="314.75" y="209.80" width="3.90" height="5.2" fill="#fff"/><text x="316.7" y="214.75" font-size="6.6" fill="#000" stroke="#000" stroke-width="0.22" text-anchor="middle" font-weight="normal" font-style="normal" >5</text>
<rect x="332.25" y="209.80" width="3.90" height="5.2" fill="#fff"/><text x="334.2" y="214.75" font-size="6.6" fill="#000" stroke="#000" stroke-width="0.22" text-anchor="middle" font-weight="normal" font-style="normal" >7</text>
<rect x="349.65" y="203.90" width="3.90" height="5.2" fill="#fff"/><text x="351.6" y="208.85" font-size="6.6" fill="#000" stroke="#000" stroke-width="0.22" text-anchor="middle" font-weight="normal" font-style="normal" >4</text>
<rect x="367.05" y="203.90" width="3.90" height="5.2" fill="#fff"/><text x="369.0" y="208.85" font-size="6.6" fill="#000" stroke="#000" stroke-width="0.22" text-anchor="middle" font-weight="normal" font-style="normal" >5</text>
<rect x="402.25" y="203.90" width="3.90" height="5.2" fill="#fff"/><text x="404.2" y="208.85" font-size="6.6" fill="#000" stroke="#000" stroke-width="0.22" text-anchor="middle" font-weight="normal" font-style="normal" >7</text>
<rect x="419.55" y="197.80" width="3.90" height="5.2" fill="#fff"/><text x="421.5" y="202.75" font-size="6.6" fill="#000" stroke="#000" stroke-width="0.22" text-anchor="middle" font-weight="normal" font-style="normal" >4</text>
<rect x="436.95" y="197.80" width="3.90" height="5.2" fill="#fff"/><text x="438.9" y="202.75" font-size="6.6" fill="#000" stroke="#000" stroke-width="0.22" text-anchor="middle" font-weight="normal" font-style="normal" >5</text>
<rect x="454.55" y="197.80" width="3.90" height="5.2" fill="#fff"/><text x="456.5" y="202.75" font-size="6.6" fill="#000" stroke="#000" stroke-width="0.22" text-anchor="middle" font-weight="normal" font-style="normal" >7</text>
<rect x="471.95" y="191.90" width="3.90" height="5.2" fill="#fff"/><text x="473.9" y="196.85" font-size="6.6" fill="#000" stroke="#000" stroke-width="0.22" text-anchor="middle" font-weight="normal" font-style="normal" >5</text>
<rect x="489.55" y="191.90" width="3.90" height="5.2" fill="#fff"/><text x="491.5" y="196.85" font-size="6.6" fill="#000" stroke="#000" stroke-width="0.22" text-anchor="middle" font-weight="normal" font-style="normal" >7</text>
<rect x="506.85" y="191.90" width="3.90" height="5.2" fill="#fff"/><text x="508.8" y="196.85" font-size="6.6" fill="#000" stroke="#000" stroke-width="0.22" text-anchor="middle" font-weight="normal" font-style="normal" >8</text>
<rect x="524.35" y="186.00" width="3.90" height="5.2" fill="#fff"/><text x="526.3" y="190.95" font-size="6.6" fill="#000" stroke="#000" stroke-width="0.22" text-anchor="middle" font-weight="normal" font-style="normal" >5</text>
<rect x="559.55" y="186.00" width="3.90" height="5.2" fill="#fff"/><text x="561.5" y="190.95" font-size="6.6" fill="#000" stroke="#000" stroke-width="0.22" text-anchor="middle" font-weight="normal" font-style="normal" >7</text>
<rect x="576.85" y="186.00" width="3.90" height="5.2" fill="#fff"/><text x="578.8" y="190.95" font-size="6.6" fill="#000" stroke="#000" stroke-width="0.22" text-anchor="middle" font-weight="normal" font-style="normal" >8</text>
<rect x="592.60" y="186.00" width="7.80" height="5.2" fill="#fff"/><text x="596.5" y="190.95" font-size="6.6" fill="#000" stroke="#000" stroke-width="0.22" text-anchor="middle" font-weight="normal" font-style="normal" >10</text>
<rect x="627.80" y="186.00" width="7.80" height="5.2" fill="#fff"/><text x="631.7" y="190.95" font-size="6.6" fill="#bcbcbc" text-anchor="middle" font-weight="normal" font-style="normal" >10</text>
<path d="M246.8 192.3V214.6" stroke="#5c5cf0" stroke-width="1"/>
<rect x="245.05" y="298.40" width="3.90" height="5.2" fill="#fff"/><text x="247.0" y="303.35" font-size="6.6" fill="#000" stroke="#000" stroke-width="0.22" text-anchor="middle" font-weight="normal" font-style="normal" >3</text>
<rect x="402.25" y="298.40" width="3.90" height="5.2" fill="#fff"/><text x="404.2" y="303.35" font-size="6.6" fill="#000" stroke="#000" stroke-width="0.22" text-anchor="middle" font-weight="normal" font-style="normal" >3</text>
<rect x="559.25" y="292.60" width="3.90" height="5.2" fill="#fff"/><text x="561.2" y="297.55" font-size="6.6" fill="#000" stroke="#000" stroke-width="0.22" text-anchor="middle" font-weight="normal" font-style="normal" >5</text>
<rect x="314.95" y="298.40" width="3.90" height="5.2" fill="#fff"/><text x="316.9" y="303.35" font-size="6.6" fill="#c0c0c0" text-anchor="middle" font-weight="normal" font-style="normal" >3</text>
<rect x="472.15" y="298.40" width="3.90" height="5.2" fill="#fff"/><text x="474.1" y="303.35" font-size="6.6" fill="#c0c0c0" text-anchor="middle" font-weight="normal" font-style="normal" >3</text>
<path d="M299.4 216.3C307.10 220.29 326.70 220.29 334.4 216.3C326.70 219.69 307.10 219.69 299.4 216.3Z" fill="#333" stroke="#333" stroke-width="0.5"/>
<path d="M421.5 195.3C429.24 191.44 448.96 191.44 456.7 195.3C448.96 192.04 429.24 192.04 421.5 195.3Z" fill="#333" stroke="#333" stroke-width="0.5"/>
<path d="M526.3 183.3C537.96 179.58 567.64 179.58 579.3 183.3C567.64 180.18 537.96 180.18 526.3 183.3Z" fill="#333" stroke="#333" stroke-width="0.5"/>
<path d="M582.4 190.2L591.2 186.9" stroke="#222" stroke-width="0.8"/>
<text x="307.8" y="226.1" font-size="6.4" fill="#000" stroke="#000" stroke-width="0.22" text-anchor="middle" font-weight="normal" font-style="normal" >H</text>
<text x="325.3" y="226.1" font-size="6.4" fill="#000" stroke="#000" stroke-width="0.22" text-anchor="middle" font-weight="normal" font-style="normal" >H</text>
<text x="430.5" y="226.1" font-size="6.4" fill="#000" stroke="#000" stroke-width="0.22" text-anchor="middle" font-weight="normal" font-style="normal" >H</text>
<text x="447.8" y="226.1" font-size="6.4" fill="#000" stroke="#000" stroke-width="0.22" text-anchor="middle" font-weight="normal" font-style="normal" >H</text>
<text x="543.8" y="226.1" font-size="6.4" fill="#000" stroke="#000" stroke-width="0.22" text-anchor="middle" font-weight="normal" font-style="normal" >H</text>
<text x="570.2" y="226.1" font-size="6.4" fill="#000" stroke="#000" stroke-width="0.22" text-anchor="middle" font-weight="normal" font-style="normal" >H</text>
<text x="587.9" y="226.1" font-size="6.4" fill="#000" stroke="#000" stroke-width="0.22" text-anchor="middle" font-weight="normal" font-style="italic" >sl.</text>
<ellipse cx="247.0" cy="259.9" rx="2.8" ry="1.9" transform="rotate(-24 247.0 259.9)" fill="#000"/><ellipse cx="247.0" cy="259.9" rx="1.85" ry="0.60" transform="rotate(-34 247.0 259.9)" fill="#fff"/>
<path d="M249.05 259.4V243.8" stroke="#333" stroke-width="0.75"/>
<ellipse cx="316.9" cy="259.9" rx="2.8" ry="1.9" transform="rotate(-24 316.9 259.9)" fill="#000"/><ellipse cx="316.9" cy="259.9" rx="1.85" ry="0.60" transform="rotate(-34 316.9 259.9)" fill="#fff"/>
<path d="M318.95 259.4V243.8" stroke="#333" stroke-width="0.75"/>
<ellipse cx="403.9" cy="259.9" rx="2.8" ry="1.9" transform="rotate(-24 403.9 259.9)" fill="#000"/><ellipse cx="403.9" cy="259.9" rx="1.85" ry="0.60" transform="rotate(-34 403.9 259.9)" fill="#fff"/>
<path d="M405.95 259.4V243.8" stroke="#333" stroke-width="0.75"/>
<ellipse cx="474.1" cy="259.9" rx="2.8" ry="1.9" transform="rotate(-24 474.1 259.9)" fill="#000"/><ellipse cx="474.1" cy="259.9" rx="1.85" ry="0.60" transform="rotate(-34 474.1 259.9)" fill="#fff"/>
<path d="M476.15 259.4V243.8" stroke="#333" stroke-width="0.75"/>
<path d="M247.2 262.7C262.56 264.96 301.64 264.96 317.0 262.7C301.64 264.46 262.56 264.46 247.2 262.7Z" fill="#333" stroke="#333" stroke-width="0.5"/>
<path d="M404.0 262.7C419.44 264.96 458.76 264.96 474.2 262.7C458.76 264.46 419.44 264.46 404.0 262.7Z" fill="#333" stroke="#333" stroke-width="0.5"/>
<ellipse cx="561.7" cy="250.8" rx="3.4" ry="2.1" fill="#000"/><ellipse cx="561.7" cy="250.8" rx="1.35" ry="1.45" transform="rotate(-25 561.7 250.8)" fill="#fff"/>
</svg>
<div class="combo" style="left:212.9px;top:384.1px;width:62.2px;height:10px"><div class="blue" style="width:9.1px"></div></div>
<div class="abs" style="left:217px;top:384px;width:49px;height:10px;overflow:hidden"><span id="allinst" class="t" style="left:-0.10px;top:1px;font-size:7.4px;line-height:9px;color:#e2e2e2;font-weight:normal;font-style:normal;font-family:'Liberation Sans',sans-serif;letter-spacing:0.101px;">All Instruments</span></div>
<svg class="abs" style="left:266.60px;top:384.25px" width="8" height="10" viewBox="-4 -5 8 10"><path d="M-1.7 -1.35L0 -2.9L1.7 -1.35M-1.7 1.35L0 2.9L1.7 1.35" stroke="#fff" stroke-width="0.95" fill="none" stroke-linecap="round" stroke-linejoin="round"/></svg>
<div class="sep" style="left:283.9px"></div>
<div class="sep" style="left:345.3px"></div>
<div class="sep" style="left:414.9px"></div>
<div class="sep" style="left:484.0px"></div>
<div class="sep" style="left:560.3px"></div>
<span id="voice" class="t" style="left:291.50px;top:385px;font-size:7.4px;line-height:9px;color:#e2e2e2;font-weight:normal;font-style:normal;font-family:'Liberation Sans',sans-serif;letter-spacing:-0.057px;">Voice:</span>
<div class="abs" style="left:316px;top:384.4px;width:11.6px;height:10.2px;background:#8a8a8a"></div>
<div class="abs" style="left:327.6px;top:384.4px;width:11.6px;height:10.2px;background:#333;box-shadow:inset 0 0 0 0.6px #555"></div>
<span id="v1" class="t" style="left:320.10px;top:387px;font-size:5.6px;line-height:6px;color:#d8d8d8;font-weight:normal;font-style:normal;font-family:'Liberation Sans',sans-serif;letter-spacing:0.000px;">1</span>
<span id="v2" class="t" style="left:331.70px;top:387px;font-size:5.6px;line-height:6px;color:#d8d8d8;font-weight:normal;font-style:normal;font-family:'Liberation Sans',sans-serif;letter-spacing:0.000px;">2</span>
<span id="speed" class="t" style="left:353.20px;top:385px;font-size:7.4px;line-height:9px;color:#e2e2e2;font-weight:normal;font-style:normal;font-family:'Liberation Sans',sans-serif;letter-spacing:-0.123px;">Speed:</span>
<div class="abs" style="left:382px;top:385px;width:20px;height:8.4px;background:#1e1e1e"></div>
<span id="p100" class="t" style="left:382.70px;top:385px;font-size:7.4px;line-height:9px;color:#f0f0f0;font-weight:normal;font-style:normal;font-family:'Liberation Sans',sans-serif;letter-spacing:-0.227px;">100%</span>
<div class="abs" style="left:402.3px;top:383.7px;width:6.4px;height:10.4px;background:#6e6e6e;border-radius:2.4px"></div>
<svg class="abs" style="left:401.50px;top:384.20px" width="8" height="10" viewBox="-4 -5 8 10"><path d="M-1.3 -1.2999999999999998L0 -2.5L1.3 -1.2999999999999998M-1.3 1.2999999999999998L0 2.5L1.3 1.2999999999999998" stroke="#e8e8e8" stroke-width="0.8" fill="none" stroke-linecap="round" stroke-linejoin="round"/></svg>
<div class="abs" style="left:423.1px;top:382.4px;width:13.6px;height:13.5px;background:linear-gradient(to bottom,#414141 0,#414141 2.4px,#494949 3.2px,#494949 100%);box-shadow:inset 0 0 0 0.7px #575757;border-radius:1px"></div>
<div class="abs" style="left:437.2px;top:382.4px;width:13.5px;height:13.5px;background:linear-gradient(to bottom,#414141 0,#414141 2.4px,#494949 3.2px,#494949 100%);box-shadow:inset 0 0 0 0.7px #575757;border-radius:1px"></div>
<div class="abs" style="left:450.9px;top:382.4px;width:13.3px;height:13.5px;background:#353535"></div>
<div class="abs" style="left:464.8px;top:382.4px;width:14.2px;height:13.5px;background:#8c8c8c"></div>
<svg class="abs" style="left:423px;top:382.8px" width="56" height="13.2" viewBox="423 382.8 56 13.2"><path d="M426.5 386.9V391.9" stroke="#1e1e1e" stroke-width="0.9"/><path d="M430.2 387L427.2 389.4L430.2 391.8ZM433.4 387L430.4 389.4L433.4 391.8Z" fill="#1e1e1e"/><path d="M441.3 385.6L447.4 389.3L441.3 393Z" fill="#1c1c1c"/><rect x="454.7" y="386.3" width="6.2" height="5.9" fill="#222"/><path d="M468.6 387.8H470L472.2 385.9V392.9L470 391H468.6Z" fill="#e4e4e4" stroke="#707070" stroke-width="0.3"/><path d="M473.6 387.4Q475 389.4 473.6 391.4M475 386.2Q477.2 389.4 475 392.6" stroke="#7d9cc0" stroke-width="0.6" fill="none"/></svg>
<span id="zoom" class="t" style="left:492.60px;top:385px;font-size:7.4px;line-height:9px;color:#e2e2e2;font-weight:normal;font-style:normal;font-family:'Liberation Sans',sans-serif;letter-spacing:-0.251px;">Zoom:</span>
<div class="abs" style="left:518.5px;top:384.8px;width:25.2px;height:9.2px;background:#1f1f1f"></div>
<div class="abs" style="left:543.5px;top:384.8px;width:8.5px;height:9.2px;background:#2f6fe0;border-radius:0 2.2px 2.2px 0"></div>
<svg class="abs" style="left:543.70px;top:384.50px" width="8" height="10" viewBox="-4 -5 8 10"><path d="M-1.9000000000000001 -0.7L0 0.9L1.9000000000000001 -0.7" stroke="#fff" stroke-width="1.05" fill="none" stroke-linecap="round" stroke-linejoin="round"/></svg>
<span id="p125" class="t" style="left:519.80px;top:385px;font-size:7.4px;line-height:9px;color:#f0f0f0;font-weight:normal;font-style:normal;font-family:'Liberation Sans',sans-serif;letter-spacing:-0.327px;">125%</span>
<span id="status" class="t" style="left:568.20px;top:385px;font-size:7.4px;line-height:9px;color:#f2f2f2;font-weight:normal;font-style:normal;font-family:'Liberation Sans',sans-serif;letter-spacing:-0.036px;">System: 1,Staff: 1,Position: 1,String: 1</span>
<div class="hdr" style="left:0;top:399.9px;width:768px;height:11.4px"></div>
<div class="abs" style="left:391.5px;top:399.9px;width:1px;height:11.4px;background:#585858;opacity:.8"></div>
<div class="abs" style="left:390.9px;top:411.3px;width:0.8px;height:82px;background:#404040"></div>
<div class="abs" style="left:391.7px;top:411.3px;width:1.6px;height:82px;background:#242424"></div>
<svg class="x" style="left:3.8px;top:401.9px;width:6px;height:6px" viewBox="-3 -3 6 6"><rect x="-2.8" y="-2.8" width="5.6" height="5.6" rx="1.4" fill="#262626" opacity=".55"/><path d="M-1.6 -1.6L1.6 1.6M-1.6 1.6L1.6 -1.6" stroke="#f6f6f6" stroke-width="1.3" fill="none"/><rect x="-0.8" y="-0.8" width="1.6" height="1.6" fill="#f6f6f6"/></svg>
<svg class="x" style="left:394.5px;top:401.9px;width:6px;height:6px" viewBox="-3 -3 6 6"><rect x="-2.8" y="-2.8" width="5.6" height="5.6" rx="1.4" fill="#262626" opacity=".55"/><path d="M-1.6 -1.6L1.6 1.6M-1.6 1.6L1.6 -1.6" stroke="#f6f6f6" stroke-width="1.3" fill="none"/><rect x="-0.8" y="-0.8" width="1.6" height="1.6" fill="#f6f6f6"/></svg>
<span id="mixer" class="t" style="left:193.70px;top:401px;font-size:6.2px;line-height:7px;color:#e4e4e4;font-weight:normal;font-style:normal;font-family:'Liberation Sans',sans-serif;letter-spacing:0.055px;">Mixer</span>
<span id="instr" class="t" style="left:566.70px;top:401px;font-size:6.2px;line-height:7px;color:#e4e4e4;font-weight:normal;font-style:normal;font-family:'Liberation Sans',sans-serif;letter-spacing:0.170px;">Instruments</span>
<span id="mn0" class="t" style="left:15.50px;top:422px;font-size:7.4px;line-height:9px;color:#ececec;font-weight:normal;font-style:normal;font-family:'Liberation Sans',sans-serif;letter-spacing:0.000px;">1.</span>
<span id="mname0" class="t" style="left:37.00px;top:422px;font-size:7.4px;line-height:9px;color:#ececec;font-weight:normal;font-style:normal;font-family:'Liberation Sans',sans-serif;letter-spacing:-0.040px;">Guitar</span>
<div class="abs" style="left:118.2px;top:424.30px;width:30px;height:2px;border-radius:1px;background:#1a76e0"></div>
<div class="abs" style="left:145.70px;top:420.30px;width:10.6px;height:10.6px;border-radius:50%;background:#8f8f8f"></div>
<div class="abs" style="left:164.10px;top:422.10px;width:9px;height:9px;border-radius:50%;background:radial-gradient(circle at 50% 30%,#c4c4c4 0,#a4a4a4 45%,#8e8e8e 100%)"></div>
<div class="abs" style="left:168.3px;top:422.70px;width:0.7px;height:2.2px;background:#555"></div>
<span id="tun0" class="t" style="left:183.90px;top:423px;font-size:6.3px;line-height:7px;color:#dadada;font-weight:normal;font-style:normal;font-family:'Liberation Sans',sans-serif;letter-spacing:0.318px;">E&nbsp;A&nbsp;D&nbsp;G&nbsp;B&nbsp;E</span>
<svg class="x" style="left:234.9px;top:423.6px;width:6px;height:6px" viewBox="-3 -3 6 6"><rect x="-2.8" y="-2.8" width="5.6" height="5.6" rx="1.4" fill="#262626" opacity=".55"/><path d="M-1.6 -1.6L1.6 1.6M-1.6 1.6L1.6 -1.6" stroke="#f6f6f6" stroke-width="1.3" fill="none"/><rect x="-0.8" y="-0.8" width="1.6" height="1.6" fill="#f6f6f6"/></svg>
<span id="mn1" class="t" style="left:15.50px;top:438px;font-size:7.4px;line-height:9px;color:#ececec;font-weight:normal;font-style:normal;font-family:'Liberation Sans',sans-serif;letter-spacing:0.000px;">2.</span>
<span id="mname1" class="t" style="left:37.00px;top:438px;font-size:7.4px;line-height:9px;color:#ececec;font-weight:normal;font-style:normal;font-family:'Liberation Sans',sans-serif;letter-spacing:-0.109px;">Bass</span>
<div class="abs" style="left:118.2px;top:440.40px;width:30px;height:2px;border-radius:1px;background:#1a76e0"></div>
<div class="abs" style="left:145.70px;top:436.40px;width:10.6px;height:10.6px;border-radius:50%;background:#8f8f8f"></div>
<div class="abs" style="left:164.10px;top:438.20px;width:9px;height:9px;border-radius:50%;background:radial-gradient(circle at 50% 30%,#c4c4c4 0,#a4a4a4 45%,#8e8e8e 100%)"></div>
<div class="abs" style="left:168.3px;top:438.80px;width:0.7px;height:2.2px;background:#555"></div>
<span id="tun1" class="t" style="left:183.90px;top:439px;font-size:6.3px;line-height:7px;color:#dadada;font-weight:normal;font-style:normal;font-family:'Liberation Sans',sans-serif;letter-spacing:0.387px;">E&nbsp;A&nbsp;D&nbsp;G</span>
<svg class="x" style="left:234.9px;top:439.7px;width:6px;height:6px" viewBox="-3 -3 6 6"><rect x="-2.8" y="-2.8" width="5.6" height="5.6" rx="1.4" fill="#262626" opacity=".55"/><path d="M-1.6 -1.6L1.6 1.6M-1.6 1.6L1.6 -1.6" stroke="#f6f6f6" stroke-width="1.3" fill="none"/><rect x="-0.8" y="-0.8" width="1.6" height="1.6" fill="#f6f6f6"/></svg>
<span id="in0" class="t" style="left:406.10px;top:422px;font-size:7.4px;line-height:9px;color:#ececec;font-weight:normal;font-style:normal;font-family:'Liberation Sans',sans-serif;letter-spacing:0.000px;">1.</span>
<span id="iname0" class="t" style="left:427.40px;top:422px;font-size:7.4px;line-height:9px;color:#ececec;font-weight:normal;font-style:normal;font-family:'Liberation Sans',sans-serif;letter-spacing:0.068px;">Distortion</span>
<div class="combo" style="left:470.1px;top:420.55px;width:100.5px;height:10.3px;background:#5f5f5f"><div class="blue" style="width:9.6px"></div></div>
<svg class="abs" style="left:561.80px;top:420.80px" width="8" height="10" viewBox="-4 -5 8 10"><path d="M-1.7 -1.35L0 -2.9L1.7 -1.35M-1.7 1.35L0 2.9L1.7 1.35" stroke="#fff" stroke-width="0.95" fill="none" stroke-linecap="round" stroke-linejoin="round"/></svg>
<span id="iinst0" class="t" style="left:474.50px;top:422px;font-size:7.4px;line-height:9px;color:#ececec;font-weight:normal;font-style:normal;font-family:'Liberation Sans',sans-serif;letter-spacing:-0.018px;">Distortion Guitar</span>
<svg class="x" style="left:580.3px;top:423.2px;width:6px;height:6px" viewBox="-3 -3 6 6"><rect x="-2.8" y="-2.8" width="5.6" height="5.6" rx="1.4" fill="#262626" opacity=".55"/><path d="M-1.6 -1.6L1.6 1.6M-1.6 1.6L1.6 -1.6" stroke="#f6f6f6" stroke-width="1.3" fill="none"/><rect x="-0.8" y="-0.8" width="1.6" height="1.6" fill="#f6f6f6"/></svg>
<span id="in1" class="t" style="left:406.10px;top:438px;font-size:7.4px;line-height:9px;color:#ececec;font-weight:normal;font-style:normal;font-family:'Liberation Sans',sans-serif;letter-spacing:0.000px;">2.</span>
<span id="iname1" class="t" style="left:427.40px;top:438px;font-size:7.4px;line-height:9px;color:#ececec;font-weight:normal;font-style:normal;font-family:'Liberation Sans',sans-serif;letter-spacing:-0.109px;">Bass</span>
<div class="combo" style="left:470.1px;top:436.75px;width:100.5px;height:10.3px;background:#5f5f5f"><div class="blue" style="width:9.6px"></div></div>
<svg class="abs" style="left:561.80px;top:437.00px" width="8" height="10" viewBox="-4 -5 8 10"><path d="M-1.7 -1.35L0 -2.9L1.7 -1.35M-1.7 1.35L0 2.9L1.7 1.35" stroke="#fff" stroke-width="0.95" fill="none" stroke-linecap="round" stroke-linejoin="round"/></svg>
<span id="iinst1" class="t" style="left:474.50px;top:438px;font-size:7.4px;line-height:9px;color:#ececec;font-weight:normal;font-style:normal;font-family:'Liberation Sans',sans-serif;letter-spacing:-0.013px;">Electric Bass (finger)</span>
<svg class="x" style="left:580.3px;top:439.1px;width:6px;height:6px" viewBox="-3 -3 6 6"><rect x="-2.8" y="-2.8" width="5.6" height="5.6" rx="1.4" fill="#262626" opacity=".55"/><path d="M-1.6 -1.6L1.6 1.6M-1.6 1.6L1.6 -1.6" stroke="#f6f6f6" stroke-width="1.3" fill="none"/><rect x="-0.8" y="-0.8" width="1.6" height="1.6" fill="#f6f6f6"/></svg>
</div></body></html>
